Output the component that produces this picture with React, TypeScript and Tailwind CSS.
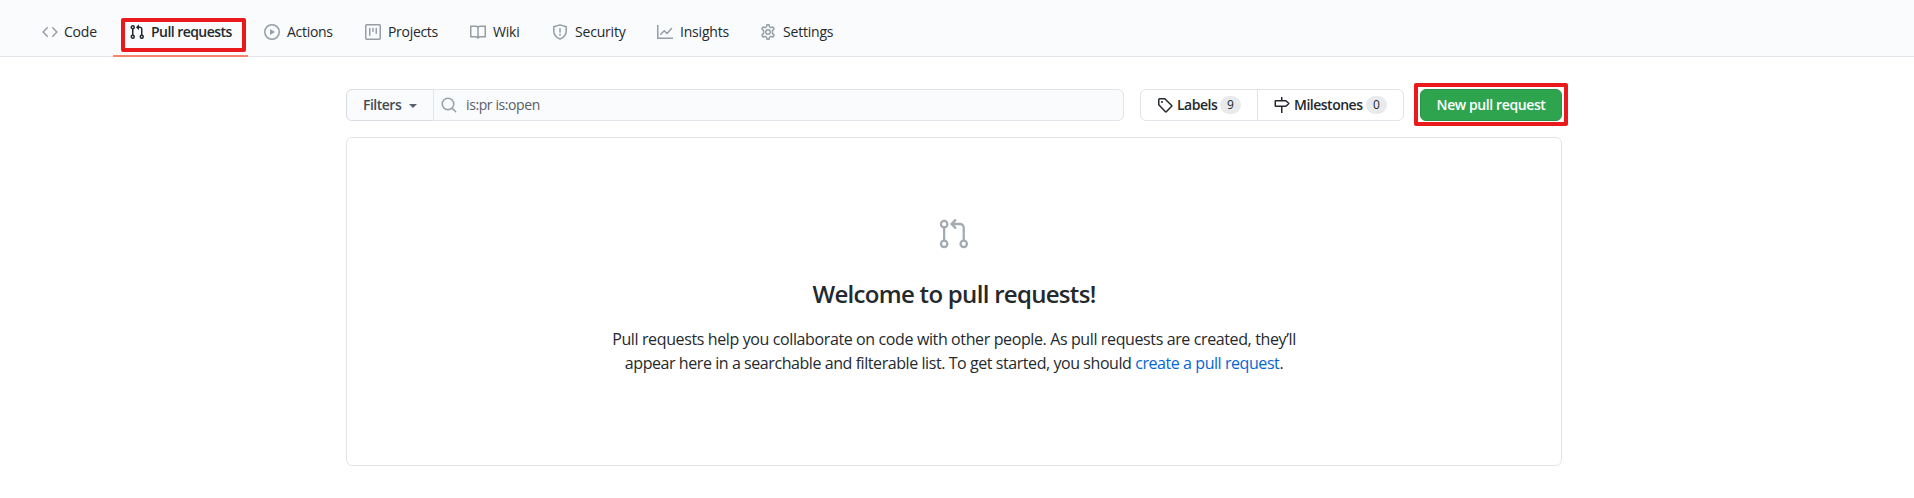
import React from 'react';

type IconProps = { className?: string; children?: React.ReactNode };

function Icon({ className = '', children }: IconProps) {
  return (
    <svg viewBox="0 0 16 16" fill="none" stroke="currentColor" strokeWidth="1.5" className={`size-4 shrink-0 ${className}`}>
      {children}
    </svg>
  );
}

const CodeIcon = () => (
  <Icon><path d="M5.25 3.75 1.1 8l4.15 4.25M10.75 3.75 14.9 8l-4.15 4.25" strokeLinecap="round" strokeLinejoin="round" /></Icon>
);
const PullIcon = () => (
  <Icon>
    <circle cx="3.75" cy="3.25" r="1.5" /><circle cx="3.75" cy="12.75" r="1.5" /><circle cx="12.75" cy="12.75" r="1.5" />
    <path d="M3.75 4.75v6.5M12.75 11.25V5A1.75 1.75 0 0 0 11 3.25H9" />
    <path d="M7.18 3.07 9.57.68a.25.25 0 0 1 .43.17v4.8a.25.25 0 0 1-.43.17L7.18 3.43a.25.25 0 0 1 0-.36z" fill="currentColor" stroke="none" />
  </Icon>
);
const PlayIcon = () => (
  <Icon><circle cx="8" cy="8" r="7.25" /><path d="M6.38 5.23a.25.25 0 0 0-.38.21v5.12a.25.25 0 0 0 .38.21l4.26-2.56a.25.25 0 0 0 0-.42z" fill="currentColor" stroke="none" /></Icon>
);
const ProjectIcon = () => (
  <Icon><rect x=".75" y=".75" width="14.5" height="14.5" rx="1" /><path d="M4.75 4.5v6.75M8 4.5v2.75M11.25 4.5v4.75" strokeLinecap="round" /></Icon>
);
const BookIcon = () => (
  <Icon><path d="M8 14.5V4.25a2 2 0 0 0-2-2H.75v10.5h4.76c.85 0 1.5.3 2.49 1.25.99-.95 1.64-1.25 2.49-1.25h4.76V2.25H10a2 2 0 0 0-2 2" /></Icon>
);
const ShieldIcon = () => (
  <Icon><path d="M8 .85 14.2 2.8V7c0 3.6-2.1 6.3-6.2 8.1C3.9 13.3 1.8 10.6 1.8 7V2.8z" strokeLinejoin="round" /><path d="M8 4.75v3.5" strokeLinecap="round" /><circle cx="8" cy="10.75" r="1" fill="currentColor" stroke="none" /></Icon>
);
const GraphIcon = () => (
  <Icon><path d="M.75 1v13.25H16" /><path d="m3.75 10.25 3.5-3.5 2.75 2.75 4.5-5" strokeLinecap="round" strokeLinejoin="round" /></Icon>
);
const GearIcon = () => (
  <Icon>
    <circle cx="8" cy="8" r="2.25" />
    <path d="M6.9.85c.7-.15 1.5-.15 2.2 0l.4 1.75c.1.35.35.6.7.75.3.15.6.2.95.1l1.7-.5c.6.6 1 1.3 1.2 2.05l-1.3 1.3c-.25.25-.35.55-.3.85v1.7c-.05.3.05.6.3.85l1.3 1.3c-.2.75-.6 1.45-1.2 2.05l-1.7-.5c-.35-.1-.65-.05-.95.1-.35.15-.6.4-.7.75l-.4 1.75c-.7.15-1.5.15-2.2 0l-.4-1.75c-.1-.35-.35-.6-.7-.75-.3-.15-.6-.2-.95-.1l-1.7.5c-.6-.6-1-1.3-1.2-2.05l1.3-1.3c.25-.25.35-.55.3-.85v-1.7c.05-.3-.05-.6-.3-.85L1.95 5c.2-.75.6-1.45 1.2-2.05l1.7.5c.35.1.65.05.95-.1.35-.15.6-.4.7-.75z" strokeLinejoin="round" />
  </Icon>
);
const SearchIcon = () => (
  <Icon className="text-[#959da5]"><circle cx="7" cy="7" r="5.75" /><path d="m11.2 11.2 3.5 3.5" strokeLinecap="round" /></Icon>
);
const TagIcon = () => (
  <Icon><path d="M1.75 2.75a1 1 0 0 1 1-1h5.03l6.9 6.7a.6.6 0 0 1 0 .85l-5.4 5.4a.6.6 0 0 1-.85 0L1.75 7.75z" strokeLinejoin="round" /><circle cx="5" cy="5" r="1" fill="currentColor" stroke="none" /></Icon>
);
const MilestoneIcon = () => (
  <Icon><path d="M7.75 0v3.5M7.75 9.5V16M1.75 3.75h10.2l2.9 2.75-2.9 2.75H1.75a.5.5 0 0 1-.5-.5v-4.5a.5.5 0 0 1 .5-.5z" strokeLinejoin="round" /></Icon>
);

const tabs = [
  { label: 'Code', icon: CodeIcon, width: 'w-[87px]', text: 'tracking-[-0.2px]' },
  { label: 'Pull requests', icon: PullIcon, width: 'w-[135px]', text: 'tracking-[-0.55px]', selected: true },
  { label: 'Actions', icon: PlayIcon, width: 'w-[101px]', text: 'pl-px tracking-[-0.3px]' },
  { label: 'Projects', icon: ProjectIcon, width: 'w-[105px]', text: 'pl-px tracking-[-0.3px]' },
  { label: 'Wiki', icon: BookIcon, width: 'w-[82px]', text: 'pl-px tracking-[-0.2px]' },
  { label: 'Security', icon: ShieldIcon, width: 'w-[105px]', text: 'pl-px tracking-[-0.2px]' },
  { label: 'Insights', icon: GraphIcon, width: 'w-[103px]', text: 'pl-px tracking-[-0.2px]' },
  { label: 'Settings', icon: GearIcon, width: 'w-[108px]', text: 'pl-px tracking-[-0.2px]' },
];

export default function App() {
  return (
    <div className="h-[498px] bg-white font-['Open_Sans',sans-serif] text-sm text-[#24292e]">
      <nav className="flex h-[57px] border-b border-[#e1e4e8] bg-[#fafbfc] pl-[26px]">
        {tabs.map(({ label, icon: TabIcon, width, text, selected }) => (
          <a key={label} className={`relative -mb-px flex h-[57px] shrink-0 items-center gap-1.5 border-b-2 pt-[9px] pl-4 whitespace-nowrap ${width} ${selected ? 'border-[#f9826c] font-semibold' : 'border-transparent'}`}>
            <span className={selected ? 'text-[#24292e]' : 'text-[#959da5]'}><TabIcon /></span>
            <span className={text}>{label}</span>
            {selected && <span className="absolute top-[18px] left-2 h-[34px] w-[125px] rounded-xs border-4 border-[#ea1a1c]" />}
          </a>
        ))}
      </nav>

      <main className="mx-auto mt-8 w-[1216px] -translate-x-[3px]">
        <div className="flex h-8">
          <button className="flex w-[88px] items-center gap-2 rounded-l-md border border-[#d9dce0] bg-[#fafbfc] pl-4 font-semibold text-[#444d56]">
            <span className="tracking-[-0.5px]">Filters</span>
            <span className="mt-0.5 border-x-4 border-t-4 border-x-transparent border-t-[#586069]" />
          </button>
          <div className="-ml-px flex w-[691px] items-center gap-[9px] rounded-r-md border border-[#e1e4e8] bg-[#fafbfc] pl-[7px] text-[#586069]">
            <SearchIcon />
            <span className="tracking-[-0.4px]">is:pr is:open</span>
          </div>
          <div className="ml-4 flex w-[264px] rounded-md border border-[#e1e4e8] font-semibold">
            <a className="flex w-[117px] items-center gap-1 border-r border-[#e1e4e8] pl-4">
              <TagIcon />
              <span className="w-[39px] tracking-[-0.5px]">Labels</span>
              <span className="flex h-[18px] w-[21px] items-center justify-center rounded-full bg-[#e8eaec] text-xs font-medium">9</span>
            </a>
            <a className="flex items-center gap-1 pl-4">
              <MilestoneIcon />
              <span className="w-[68px] tracking-[-0.5px]">Milestones</span>
              <span className="flex h-[18px] w-[21px] items-center justify-center rounded-full bg-[#e8eaec] text-xs font-medium">0</span>
            </a>
          </div>
          <button className="relative ml-4 flex w-[142px] items-center justify-center rounded-md border border-[#2a9147] bg-[#2ea44f] font-semibold whitespace-nowrap text-white">
            <span className="tracking-[-0.4px]">New pull request</span>
            <span className="absolute -top-[7px] -left-[7px] h-[43px] w-[154px] rounded-xs border-4 border-[#ea1a1c]" />
          </button>
        </div>

        <section className="mt-4 flex h-[329px] flex-col items-center rounded-md border border-[#e1e4e8] pt-20">
          <svg viewBox="0 0 24 24" fill="none" stroke="#a3aab1" strokeWidth="1.7" className="size-8">
            <circle cx="4.6" cy="4.6" r="2.4" /><circle cx="4.6" cy="19.4" r="2.4" /><circle cx="19.3" cy="19.4" r="2.4" />
            <path d="M4.6 7v10M19.3 17V7.25A2.75 2.75 0 0 0 16.55 4.5H10.5" />
            <path d="m13 1.6-2.9 2.9L13 7.4" strokeLinecap="round" strokeLinejoin="round" />
          </svg>
          <h3 className="mt-[26px] text-2xl leading-9 font-semibold tracking-[-0.7px] whitespace-nowrap">Welcome to pull requests!</h3>
          <p className="mt-[15px] text-center text-base leading-6 whitespace-nowrap">
            <span className="block tracking-[-0.38px]">Pull requests help you collaborate on code with other people. As pull requests are created, they’ll</span>
            <span className="block tracking-[-0.43px]">appear here in a searchable and filterable list. To get started, you should <a className="text-[#0366d6]">create a pull request</a>.</span>
          </p>
        </section>
      </main>
    </div>
  );
}
